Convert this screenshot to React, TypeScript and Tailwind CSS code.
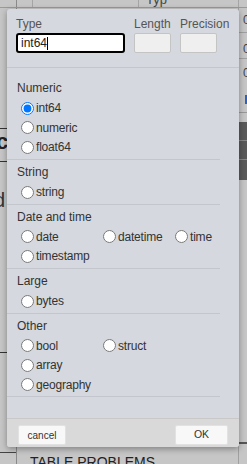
import React from 'react';

type Opt = { name: string; checked?: boolean };

const sections: { title: string; rows: Opt[][] }[] = [
    { title: 'Numeric', rows: [[{ name: 'int64', checked: true }], [{ name: 'numeric' }], [{ name: 'float64' }]] },
    { title: 'String', rows: [[{ name: 'string' }]] },
    { title: 'Date and time', rows: [[{ name: 'date' }, { name: 'datetime' }, { name: 'time' }], [{ name: 'timestamp' }]] },
    { title: 'Large', rows: [[{ name: 'bytes' }]] },
    { title: 'Other', rows: [[{ name: 'bool' }, { name: 'struct' }], [{ name: 'array' }], [{ name: 'geography' }]] },
];

const colWidth = ['w-[82px]', 'w-[72px]', ''];

const Radio: React.FC<{ opt: Opt; col: number; last: boolean }> = ({ opt, col, last }) => (
    <label className={`flex items-center shrink-0 ${last ? '' : colWidth[col]}`}>
        <input type="radio" name="type" defaultChecked={opt.checked} className="m-0 w-[13px] h-[13px] shrink-0" />
        <span className="ml-[2px] text-[12px] tracking-[-0.2px] text-[#333]">{opt.name}</span>
    </label>
);

const Field: React.FC<{ label: string; width: string; children: React.ReactNode }> = ({ label, width, children }) => (
    <div className={width}>
        <div className="h-[14px] leading-[14px] text-[12px] text-[#555] whitespace-nowrap">{label}</div>
        <div className="mt-[2px]">{children}</div>
    </div>
);

export default function App() {
    return (
        <div className="relative w-[247px] h-[464px] overflow-hidden bg-[#c6c6c6] font-['Liberation_Sans',Arial,sans-serif]">
            {/* page behind the overlay */}
            <div className="h-full flex flex-col">
                <div className="h-[8px] shrink-0 border-b border-[#9a9a9a] flex">
                    <div className="w-[17px] border-r border-[#8a8a8a]" />
                    <div className="w-[16px] border-r border-[#a5a5a5]" />
                    <div className="w-[106px] border-r border-[#a5a5a5]" />
                    <div className="w-[100px] border-r border-[#a5a5a5] overflow-hidden">
                        <div className="pl-[7px] -mt-[8px] text-[13px] text-[#444] leading-[16px]">Typ</div>
                    </div>
                </div>
                <div className="flex-1 flex">
                    <div className="w-[17px] shrink-0 border-r border-[#8a8a8a] flex flex-col overflow-hidden">
                        <div className="mt-[120px] w-[8px] border-t border-[#333]" />
                        <div className="h-[32px] -ml-[4px] text-[22px] font-bold text-[#222] leading-[26px]">c</div>
                        <div className="w-[8px] border-t border-[#333]" />
                        <div className="mt-[26px] -ml-[6px] text-[20px] text-[#333] leading-[24px]">d</div>
                        <div className="mt-[140px] w-[8px] border-t border-[#333]" />
                        <div className="mt-auto mb-[11px] w-[16px] border-t border-[#444]" />
                    </div>
                    <div className="flex-1 flex flex-col justify-end">
                        <div className="pl-[13px] -mb-[6px] text-[14px] text-[#222] leading-[16px] whitespace-nowrap">TABLE PROBLEMS</div>
                    </div>
                    <div className="w-[9px] shrink-0 border-l border-[#a0a0a0] flex flex-col text-[12px] text-[#444] leading-[12px]">
                        <div className="h-[24px] pt-[6px] pl-[4px]">0</div>
                        <div className="border-t border-[#a0a0a0] h-[26px] pt-[10px] pl-[4px]">0</div>
                        <div className="border-t border-[#a0a0a0] h-[54px] pt-[8px] pl-[4px]">
                            0
                            <div className="mt-[16px] ml-[2px] w-[4px] h-[9px] bg-[#2a62c0]" />
                        </div>
                        <div className="border-t border-[#999] h-[10px]" />
                        <div className="h-[58px] bg-[#5a5a5a] flex flex-col">
                            <div className="h-[19px] border-b border-[#888]" />
                            <div className="h-[19px] border-b border-[#888]" />
                        </div>
                        <div className="mt-auto mb-[20px] h-[2px] bg-[#555]" />
                    </div>
                </div>
            </div>

            {/* dialog */}
            <div className="absolute left-[7px] top-[9px] w-[232px] h-[438px] rounded-[3px] bg-[#d5d8de] shadow-[0_2px_6px_rgba(0,0,0,0.35)] flex flex-col overflow-hidden">
                <div className="h-[59px] shrink-0 border-b border-[#c3c6cc] pt-[8px] pl-[9px] flex gap-[9px]">
                    <Field label="Type" width="w-[109px]">
                        <div className="h-[20px] rounded-[3px] border-2 border-black bg-white flex items-center pl-[3px] text-[12px] text-[#222]">
                            int64<span className="inline-block w-px h-[13px] bg-black" />
                        </div>
                    </Field>
                    <Field label="Length" width="w-[37px]">
                        <div className="h-[20px] rounded-[2px] border border-[#c4c4c4] bg-[#efefef]" />
                    </Field>
                    <Field label="Precision" width="w-[37px]">
                        <div className="h-[20px] rounded-[2px] border border-[#c4c4c4] bg-[#efefef]" />
                    </Field>
                </div>

                <div className="flex-1 pt-[8px]">
                    {sections.map((s) => (
                        <div key={s.title} className="w-[213px] border-b border-[#c3c6cc] pt-[4px] pb-[1.75px]">
                            <div className="h-[16px] leading-[16px] pl-[10px] text-[12px] text-[#333]">{s.title}</div>
                            <div className="mt-[2.5px]">
                                {s.rows.map((row, i) => (
                                    <div key={i} className="h-[19.5px] flex items-center pl-[14px]">
                                        {row.map((o, j) => (
                                            <Radio key={o.name} opt={o} col={j} last={j === row.length - 1} />
                                        ))}
                                    </div>
                                ))}
                            </div>
                        </div>
                    ))}
                </div>

                <div className="h-[29px] shrink-0 border-t border-[#c8c8c8] bg-[#d9d9d9] px-[11px] pt-[6px] flex justify-between items-start">
                    <button className="w-[48px] h-[20px] rounded-[2px] border border-[#e2e2e2] bg-[#f8f8f8] text-[10px] text-[#333]">cancel</button>
                    <button className="w-[53px] h-[20px] rounded-[2px] border border-[#e2e2e2] bg-[#f8f8f8] text-[10.5px] text-[#333]">OK</button>
                </div>
            </div>
        </div>
    );
}
